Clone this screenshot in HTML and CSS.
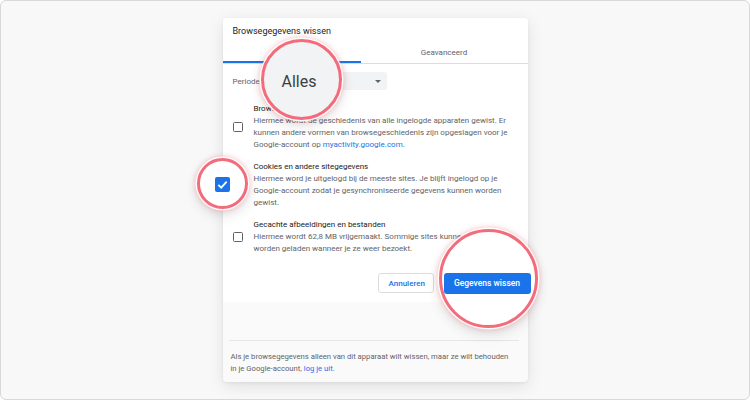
FILE: index.html
```html
<!DOCTYPE html>
<html lang="nl">
<head>
  <meta charset="UTF-8">
  <meta name="viewport" content="width=device-width, initial-scale=1.0">
  <title>Browsegegevens wissen</title>
  <link rel="stylesheet" href="styles.css">
</head>
<body>

  <div class="page">
    <div class="dialog">

      <div class="dialog-body">
        <h1 class="dialog-title">Browsegegevens wissen</h1>

        <!-- Tabs -->
        <div class="tabs">
          <div class="tab tab-active">Basis</div>
          <div class="tab">Geavanceerd</div>
        </div>

        <!-- Time range -->
        <div class="period-row">
          <span class="period-label">Periode</span>
          <div class="select">
            <span>Alles</span>
            <span class="select-arrow"></span>
          </div>
        </div>

        <!-- Options -->
        <ul class="options">
          <li class="option">
            <span class="checkbox"></span>
            <div class="option-text">
              <div class="option-title">Browsegeschiedenis</div>
              <div class="option-desc">Hiermee wordt de geschiedenis van alle ingelogde apparaten gewist. Er kunnen andere vormen van browsegeschiedenis zijn opgeslagen voor je Google-account op <a href="#">myactivity.google.com</a>.</div>
            </div>
          </li>
          <li class="option">
            <span class="checkbox checked">
              <svg viewBox="0 0 10 10"><polyline points="2,5.2 4.2,7.3 8,3" /></svg>
            </span>
            <div class="option-text">
              <div class="option-title">Cookies en andere sitegegevens</div>
              <div class="option-desc">Hiermee word je uitgelogd bij de meeste sites. Je blijft ingelogd op je Google-account zodat je gesynchroniseerde gegevens kunnen worden gewist.</div>
            </div>
          </li>
          <li class="option">
            <span class="checkbox"></span>
            <div class="option-text">
              <div class="option-title">Gecachte afbeeldingen en bestanden</div>
              <div class="option-desc">Hiermee wordt 62,8 MB vrijgemaakt. Sommige sites kunnen langzamer worden geladen wanneer je ze weer bezoekt.</div>
            </div>
          </li>
        </ul>

        <div class="actions">
          <button class="btn btn-cancel">Annuleren</button>
          <button class="btn btn-primary">Gegevens wissen</button>
        </div>
      </div>

      <div class="dialog-footer">
        <p class="footer-text">Als je browsegegevens alleen van dit apparaat wilt wissen, maar ze wilt behouden in je Google-account, <a href="#">log je uit</a>.</p>
      </div>

      <!-- Magnifier highlights -->
      <div class="lens lens-period">Alles</div>
      <div class="lens lens-check">
        <span class="big-check">
          <svg viewBox="0 0 15 15"><polyline points="3.3,7.8 6.2,10.6 11.7,4.6" /></svg>
        </span>
      </div>
      <div class="lens lens-button">
        <span class="big-button">Gegevens wissen</span>
      </div>

    </div>
  </div>

</body>
</html>
```

FILE: styles.css
```css
body {
  margin: 0;
  font-family: Roboto, "Noto Sans", Arial, sans-serif;
  color: #202124;
}

.page {
  width: 750px;
  height: 400px;
  box-sizing: border-box;
  border: 1px solid #d8d8d8;
  border-radius: 6px;
  background-color: #f8f8f8;
  display: flex;
  justify-content: center;
  padding-top: 17px;
}

.dialog {
  position: relative;
  width: 305px;
  height: 364px;
  background-color: #fafafa;
  border-radius: 4px;
  box-shadow: 0 4px 16px rgba(0, 0, 0, 0.1), 0 1px 3px rgba(0, 0, 0, 0.06);
  display: flex;
  flex-direction: column;
}

.dialog-body {
  background-color: #fff;
  border-radius: 4px 4px 0 0;
  padding-bottom: 9px;
}

.dialog-title {
  margin: 0;
  padding: 7px 10px 0;
  font-size: 9px;
  font-weight: 400;
  line-height: 13px;
  color: #202124;
}

/* Tabs */
.tabs {
  display: flex;
  border-bottom: 1px solid #dadce0;
}

.tab {
  height: 25px;
  line-height: 29px;
  text-align: center;
  font-size: 8px;
  color: #5f6368;
}

.tab:first-child {
  width: 138px;
}

.tab:last-child {
  flex: 1;
}

.tab-active {
  color: #1a73e8;
  box-shadow: inset 0 -2px 0 #1a73e8;
}

/* Time range */
.period-row {
  display: flex;
  align-items: center;
  margin-top: 8px;
  padding-left: 10px;
}

.period-label {
  font-size: 8px;
  color: #5f6368;
  width: 38px;
}

.select {
  width: 116px;
  height: 18px;
  box-sizing: border-box;
  padding: 0 6px 0 8px;
  background-color: #f1f3f4;
  border-radius: 3px;
  display: flex;
  align-items: center;
  justify-content: space-between;
  font-size: 8px;
}

.select-arrow {
  width: 0;
  height: 0;
  border-left: 3px solid transparent;
  border-right: 3px solid transparent;
  border-top: 3px solid #5f6368;
}

/* Options */
.options {
  list-style-type: none;
  margin: 13px 0 0;
  padding: 0 10px;
  display: flex;
  flex-direction: column;
  gap: 10px;
}

.option {
  display: flex;
  align-items: center;
  gap: 11px;
}

.checkbox {
  flex: none;
  width: 10px;
  height: 10px;
  box-sizing: border-box;
  border: 1.5px solid #5f6368;
  border-radius: 1.5px;
}

.checkbox.checked {
  border: none;
  background-color: #1a73e8;
}

.checkbox svg {
  display: block;
  width: 10px;
  height: 10px;
  fill: none;
  stroke: #fff;
  stroke-width: 1.4;
}

.option-text {
  font-size: 8px;
  line-height: 12px;
  width: 264px;
}

.option-title {
  color: #202124;
}

.option-desc {
  color: #5f6368;
}

.option-desc a,
.footer-text a {
  color: #1a73e8;
  text-decoration: none;
}

/* Buttons */
.actions {
  display: flex;
  justify-content: flex-end;
  gap: 8px;
  margin-top: 18px;
  padding-right: 10px;
}

.btn {
  height: 20px;
  padding: 0 10px;
  font-family: inherit;
  font-size: 8px;
  font-weight: 500;
  border-radius: 3px;
  cursor: pointer;
}

.btn-cancel {
  background-color: #fff;
  color: #1a73e8;
  border: 1px solid #dadce0;
  width: 56px;
}

.btn-primary {
  background-color: #1a73e8;
  color: #fff;
  border: none;
  width: 76px;
}

/* Footer */
.dialog-footer {
  flex: 1;
  padding: 38px 9px 0 6px;
}

.footer-text {
  margin: 0;
  border-top: 1px solid #e6e6e6;
  padding: 10px 8px 0 2px;
  font-size: 7.7px;
  line-height: 12px;
  color: #5f6368;
}

/* Magnifier circles drawn over the dialog */
.lens {
  position: absolute;
  box-sizing: border-box;
  border-radius: 50%;
  border: 3px solid #f36c7c;
  background-color: #fff;
  box-shadow: 0 0 0 1.5px rgba(255, 255, 255, 0.9), 0 0 5px 2px rgba(243, 108, 124, 0.35), 0 6px 14px rgba(0, 0, 0, 0.12);
  display: flex;
  align-items: center;
  justify-content: center;
}

.lens-period {
  left: 38px;
  top: 21px;
  width: 81px;
  height: 81px;
  background-color: #f1f3f4;
  font-size: 16px;
  color: #3c4043;
  padding: 4px 4px 0 0;
}

.lens-check {
  left: -26px;
  top: 140px;
  width: 51px;
  height: 51px;
  padding-top: 2px;
}

.big-check {
  width: 15px;
  height: 15px;
  border-radius: 2px;
  background-color: #1a73e8;
}

.big-check svg {
  display: block;
  width: 15px;
  height: 15px;
  fill: none;
  stroke: #fff;
  stroke-width: 1.8;
}

.lens-button {
  left: 216px;
  top: 211px;
  width: 99px;
  height: 99px;
  padding: 9px 2px 0 0;
}

.big-button {
  width: 87px;
  height: 21px;
  line-height: 21px;
  text-align: center;
  border-radius: 3px;
  background-color: #1a73e8;
  color: #fff;
  font-size: 8.5px;
  font-weight: 500;
}
```
